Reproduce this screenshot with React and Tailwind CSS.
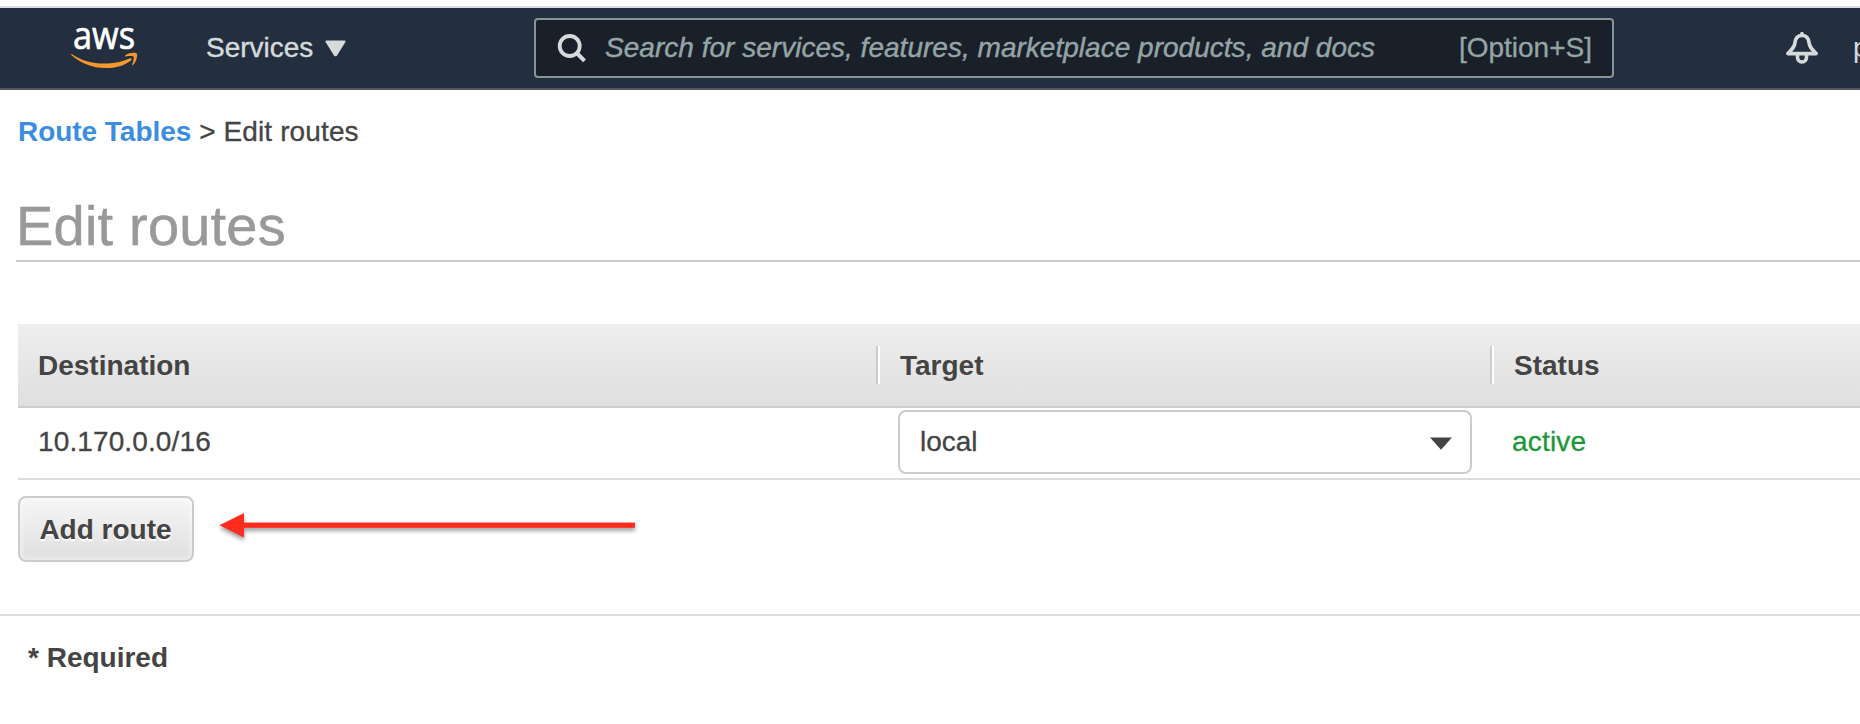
function AwsLogo() {
  return (
    <svg className="h-[80px] w-[72px] shrink-0 overflow-visible" viewBox="0 -20 72 80">
      <text
        x="2"
        y="20.500"
        fill="#fff"
        stroke="#fff"
        strokeWidth="0.700"
        fontFamily="'Open Sans', 'Noto Sans', sans-serif"
        fontSize="38"
        textLength="62"
        lengthAdjust="spacingAndGlyphs"
      >
        aws
      </text>
      <path
        d="M1.200 26.200C10 32.500 21 35.500 33 35.500C42.500 35.500 52 33.500 58.500 30.400C60.300 29.700 61.500 31.200 60 32.400C53.500 37.500 45 40 34.500 40C21.500 40 9.500 35 .5 27.200C-.2 26.500 .4 25.700 1.200 26.200Z"
        fill="#f7982e"
      />
      <path
        d="M54.300 27.300C57.500 24.600 64.500 24.200 65.700 25.600C67 27.200 65.300 34.200 62 37C61.400 37.500 60.800 37.200 61.100 36.500C62.200 34 63.300 29.800 62.500 28.800C61.700 27.800 57.500 28.100 54.900 28.400C54.100 28.500 53.700 27.800 54.300 27.300Z"
        fill="#f7982e"
      />
    </svg>
  );
}

function SearchIcon() {
  return (
    <svg className="h-[30px] w-[30px] shrink-0" viewBox="0 0 30 30" fill="none" stroke="#d5dbdb">
      <circle cx="12.700" cy="13" r="10" strokeWidth="3.800" />
      <path d="M19.700 20L27.500 27.800" strokeWidth="4" />
    </svg>
  );
}

function BellIcon() {
  return (
    <svg className="h-[34px] w-[34px] shrink-0" viewBox="0 0 34 34" fill="none" stroke="#d5dbdb" strokeWidth="3.600" strokeLinejoin="round">
      <path d="M17 2.500V4" strokeLinecap="round" />
      <path d="M17 4.500C12.500 4.500 10.300 8 9.900 12C9.600 16 7 18.500 2.800 22.600H31.200C27 18.500 24.400 16 24.100 12C23.700 8 21.500 4.500 17 4.500Z" />
      <path d="M12.500 23.500V26C12.500 29 14.300 31 17 31C19.700 31 21.500 29 21.500 26V23.500" />
    </svg>
  );
}

function NavBar() {
  return (
    <header className="flex h-[84px] items-center border-t-2 border-b-2 border-t-[#dcdce4] border-b-[#545664] bg-[#232f3e] text-[#d5dbdb]">
      <div className="ml-[71px] flex">
        <AwsLogo />
      </div>
      <div className="ml-[63px] flex w-[328px] items-center">
        <span className="[-webkit-text-stroke:0.4px_#d5dbdb]">Services</span>
        <svg className="ml-[12px] h-[17px] w-[21px]" viewBox="0 0 21 17" fill="#d5dbdb">
          <path d="M1.500 .5H19.500Q21 .7 20.300 2.200L12 15.500Q10.500 17.200 9 15.500L.7 2.200Q0 .7 1.500 .5Z" />
        </svg>
      </div>
      <div className="flex h-[60px] w-[1080px] shrink-0 items-center rounded-[4px] border-2 border-[#879596] bg-[#1a2029] pl-[21px] pr-[20px] text-[#95a5a6]">
        <SearchIcon />
        <span className="ml-[18px] italic tracking-[0.020px] [-webkit-text-stroke:0.4px_#95a5a6]">
          Search for services, features, marketplace products, and docs
        </span>
        <span className="ml-auto [-webkit-text-stroke:0.3px_#95a5a6]">[Option+S]</span>
      </div>
      <div className="ml-[171px] flex">
        <BellIcon />
      </div>
      <span className="ml-[34px] w-[7px] overflow-hidden whitespace-nowrap">p</span>
    </header>
  );
}

function Divider() {
  return <div className="h-[38px] w-[4px] shrink-0 border-l-2 border-r-2 border-l-[#ccc] border-r-white" />;
}

function RouteTable() {
  return (
    <section className="ml-[18px] mt-[62px]">
      <div className="flex h-[84px] items-center border-b-2 border-[#ccc] bg-gradient-to-b from-[#eee] to-[#dfdfdf] font-bold">
        <div className="w-[858px] pl-[20px] pt-[2px]">Destination</div>
        <Divider />
        <div className="w-[610px] pl-[20px] pt-[2px]">Target</div>
        <Divider />
        <div className="pl-[20px] pt-[2px]">Status</div>
      </div>
      <div className="flex h-[72px] items-start border-b-2 border-[#ddd] pt-[2px]">
        <div className="w-[880px] pl-[20px] leading-[64px] tracking-[0.120px] [-webkit-text-stroke:0.3px_#444]">10.170.0.0/16</div>
        <div className="flex h-[64px] w-[574px] items-center justify-between rounded-[8px] border-2 border-[#ccc] bg-white pl-[20px] pr-[17px]">
          <span className="[-webkit-text-stroke:0.3px_#444]">local</span>
          <svg className="mt-[3px] h-[13px] w-[24px]" viewBox="0 0 24 13" fill="#444">
            <path d="M1 .5H23L12 12.800Z" />
          </svg>
        </div>
        <div className="pl-[40px] leading-[64px] tracking-[0.200px] text-[#1a9839] [-webkit-text-stroke:0.3px_#1a9839]">active</div>
      </div>
    </section>
  );
}

function RedArrow() {
  return (
    <svg className="ml-[20px] mt-[10px] h-[40px] w-[430px]" viewBox="0 0 430 40">
      <g fill="#ff2b1c" className="[filter:drop-shadow(0_3px_2px_rgba(0,0,0,0.4))]">
        <path d="M5.500 19.300L30 7V31.500Z" />
        <rect x="29" y="16.600" width="392" height="5.200" />
      </g>
    </svg>
  );
}

export default function App() {
  return (
    <div className="h-[724px] w-[1860px] overflow-hidden bg-white pt-[6px] font-['Liberation_Sans',Arial,sans-serif] text-[28px] leading-[32px] text-[#444]">
      <NavBar />
      <nav className="mt-[26px] pl-[18px]">
        <a className="font-bold tracking-[-0.040px] text-[#3b8de0]">Route Tables</a>
        <span className="tracking-[0.120px] [-webkit-text-stroke:0.3px_#444]"> &gt; Edit routes</span>
      </nav>
      <h1 className="ml-[16px] mt-[46px] h-[68px] border-b-2 border-[#ccc] text-[56px] leading-[64px] tracking-[0.200px] text-[#999] [-webkit-text-stroke:0.500px_#999]">
        Edit routes
      </h1>
      <RouteTable />
      <div className="flex items-start pt-[16px]">
        <button className="ml-[18px] h-[66px] w-[176px] rounded-[8px] border-2 border-[#ccc] bg-gradient-to-b from-[#f6f6f6] to-[#dfdfdf] pr-[1px] pt-[2px] font-bold shadow-[inset_0_0_6px_rgba(255,255,255,0.8)] [text-shadow:0_2px_0_#fff]">
          Add route
        </button>
        <RedArrow />
      </div>
      <footer className="mt-[52px] border-t-2 border-[#ddd] pl-[28px] pt-[26px] font-bold">* Required</footer>
    </div>
  );
}
